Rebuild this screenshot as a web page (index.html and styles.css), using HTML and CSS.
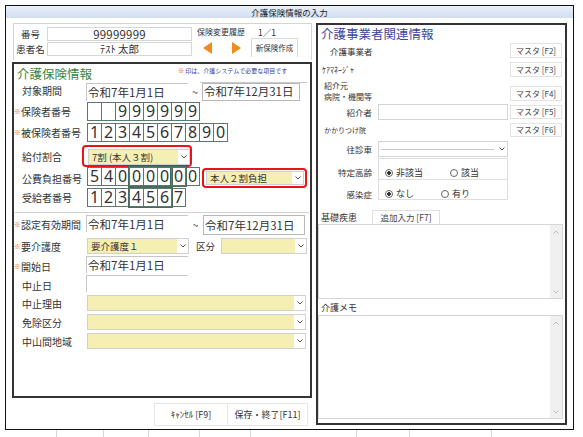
FILE: index.html
```html
<!DOCTYPE html>
<html lang="ja">
<head>
<meta charset="utf-8">
<title>介護保険情報の入力</title>
<link rel="stylesheet" href="styles.css">
</head>
<body>
<div class="win">
  <div class="titlebar">介護保険情報の入力</div>
  <div class="content">
    <div class="leftcol">
      <div class="header">
        <div class="hlabels"><div class="hl">番号</div><div class="hl">患者名</div></div>
        <div class="hfields"><div class="hf num">99999999</div><div class="hf">ﾃｽﾄ 太郎</div></div>
        <div class="hright">
          <div class="hist"><span>保険変更履歴</span><span class="cnt">1／1</span></div>
          <div class="nav">
            <svg class="arrow" width="9" height="12" viewBox="0 0 9 12"><polygon points="9,0 9,12 0,6" fill="#f08a1c"/></svg>
            <svg class="arrow r" width="9" height="12" viewBox="0 0 9 12"><polygon points="0,0 0,12 9,6" fill="#f08a1c"/></svg>
            <div class="newbtn">新保険作成</div>
          </div>
        </div>
      </div>

      <div class="lpanel">
        <div class="ltitle">
          <div class="ttl green">介護保険情報</div>
          <div class="noteblk">
            <div class="note"><span class="red">※</span> 印は、介護システムで必要な項目です</div>
            <div class="noteline"></div>
          </div>
        </div>

        <div class="row r1">
          <div class="lbl">対象期間</div>
          <div class="date">令和7年1月1日</div>
          <div class="tilde">~</div>
          <div class="date2">令和7年12月31日</div>
        </div>

        <div class="row r2">
          <div class="lbl req"><span class="ast">※</span>保険者番号</div>
          <div class="cells">
            <div class="cell"></div><div class="cell"></div><div class="cell">9</div><div class="cell">9</div><div class="cell">9</div><div class="cell">9</div><div class="cell">9</div><div class="cell">9</div>
          </div>
        </div>

        <div class="row r3">
          <div class="lbl req"><span class="ast">※</span>被保険者番号</div>
          <div class="cells">
            <div class="cell">1</div><div class="cell">2</div><div class="cell">3</div><div class="cell">4</div><div class="cell">5</div><div class="cell">6</div><div class="cell">7</div><div class="cell">8</div><div class="cell">9</div><div class="cell">0</div>
          </div>
        </div>

        <div class="row r4">
          <div class="lbl">給付割合</div>
          <div class="redframe rf1">
            <div class="sel w101"><div class="v">7割 (本人３割)</div><div class="arr"><svg width="6" height="4" viewBox="0 0 6 4"><polyline points="0.5,0.5 3,3 5.5,0.5" fill="none" stroke="#555" stroke-width="1"/></svg></div></div>
          </div>
        </div>

        <div class="row r5">
          <div class="lbl">公費負担番号</div>
          <div class="cells">
            <div class="cell">5</div><div class="cell">4</div><div class="cell">0</div>
            <div class="grp"><div class="cell">0</div><div class="cell">0</div><div class="cell">0</div></div>
            <div class="grp"><div class="cell">0</div></div>
            <div class="cell">0</div>
          </div>
          <div class="redframe rf2">
            <div class="sel grow h15"><div class="v">本人２割負担</div><div class="arr"><svg width="6" height="4" viewBox="0 0 6 4"><polyline points="0.5,0.5 3,3 5.5,0.5" fill="none" stroke="#555" stroke-width="1"/></svg></div></div>
          </div>
        </div>

        <div class="row r6">
          <div class="lbl">受給者番号</div>
          <div class="cells">
            <div class="cell">1</div><div class="cell">2</div><div class="cell">3</div>
            <div class="grp"><div class="cell">4</div><div class="cell">5</div><div class="cell">6</div></div>
            <div class="cell">7</div>
          </div>
        </div>

        <div class="sep"></div>

        <div class="row r7">
          <div class="lbl req"><span class="ast">※</span>認定有効期間</div>
          <div class="date h17">令和7年1月1日</div>
          <div class="tilde t2">~</div>
          <div class="date2 w102">令和7年12月31日</div>
        </div>

        <div class="row r8">
          <div class="lbl req"><span class="ast">※</span>要介護度</div>
          <div class="sel w101"><div class="v">要介護度１</div><div class="arr"><svg width="6" height="4" viewBox="0 0 6 4"><polyline points="0.5,0.5 3,3 5.5,0.5" fill="none" stroke="#555" stroke-width="1"/></svg></div></div>
          <div class="kbn">区分</div>
          <div class="sel w86"><div class="v"></div><div class="arr"><svg width="6" height="4" viewBox="0 0 6 4"><polyline points="0.5,0.5 3,3 5.5,0.5" fill="none" stroke="#555" stroke-width="1"/></svg></div></div>
        </div>

        <div class="row r9">
          <div class="lbl req"><span class="ast">※</span>開始日</div>
          <div class="date h17">令和7年1月1日</div>
        </div>

        <div class="row r10">
          <div class="lbl">中止日</div>
          <div class="date h17"></div>
        </div>

        <div class="row r11">
          <div class="lbl">中止理由</div>
          <div class="sel w219"><div class="v"></div><div class="arr"><svg width="6" height="4" viewBox="0 0 6 4"><polyline points="0.5,0.5 3,3 5.5,0.5" fill="none" stroke="#555" stroke-width="1"/></svg></div></div>
        </div>

        <div class="row r12">
          <div class="lbl">免除区分</div>
          <div class="sel w219"><div class="v"></div><div class="arr"><svg width="6" height="4" viewBox="0 0 6 4"><polyline points="0.5,0.5 3,3 5.5,0.5" fill="none" stroke="#555" stroke-width="1"/></svg></div></div>
        </div>

        <div class="row r13">
          <div class="lbl">中山間地域</div>
          <div class="sel w219"><div class="v"></div><div class="arr"><svg width="6" height="4" viewBox="0 0 6 4"><polyline points="0.5,0.5 3,3 5.5,0.5" fill="none" stroke="#555" stroke-width="1"/></svg></div></div>
        </div>
      </div>

      <div class="btns">
        <div class="btn b1">ｷｬﾝｾﾙ [F9]</div>
        <div class="btn b2">保存・終了[F11]</div>
      </div>
    </div>

    <div class="rpanel">
      <div class="rtitle">介護事業者関連情報</div>

      <div class="rrow f2">
        <div class="rl jigyo">介護事業者</div>
        <div class="mbtn">マスタ [F2]</div>
      </div>
      <div class="rrow f3">
        <div class="rl care">ｹｱﾏﾈｰｼﾞｬ</div>
        <div class="mbtn">マスタ [F3]</div>
      </div>
      <div class="rrow f4">
        <div class="rl two"><div>紹介元</div><div>病院・機関等</div></div>
        <div class="mbtn">マスタ [F4]</div>
      </div>
      <div class="rrow f5">
        <div class="rlab">紹介者</div>
        <div class="inp"></div>
        <div class="mbtn">マスタ [F5]</div>
      </div>
      <div class="rrow f6">
        <div class="rl kaka">かかりつけ院</div>
        <div class="mbtn">マスタ [F6]</div>
      </div>
      <div class="rrow f7">
        <div class="rlab">往診車</div>
        <div class="wsel"><div class="wv"><div class="wline"></div></div><div class="arr"><svg width="6" height="4" viewBox="0 0 6 4"><polyline points="0.5,0.5 3,3 5.5,0.5" fill="none" stroke="#555" stroke-width="1"/></svg></div></div>
      </div>
      <div class="rrow rad1">
        <div class="rlab">特定高齢</div>
        <div class="radbox">
          <span class="radio on"></span><span class="rt">非該当</span>
          <span class="radio r2nd"></span><span class="rt">該当</span>
        </div>
      </div>
      <div class="rrow rad2">
        <div class="rlab">感染症</div>
        <div class="radbox last">
          <span class="radio on"></span><span class="rt">なし</span>
          <span class="radio r2nd"></span><span class="rt">有り</span>
        </div>
      </div>

      <div class="rrow kiso">
        <div class="klab">基礎疾患</div>
        <div class="addbtn">追加入力 [F7]</div>
      </div>
      <div class="tarea ta1">
        <div class="tbody"></div>
        <div class="sbar">
          <svg width="6" height="4" viewBox="0 0 6 4"><polyline points="0.5,3.5 3,1 5.5,3.5" fill="none" stroke="#bbb" stroke-width="1"/></svg>
          <svg width="6" height="4" viewBox="0 0 6 4"><polyline points="0.5,0.5 3,3 5.5,0.5" fill="none" stroke="#bbb" stroke-width="1"/></svg>
        </div>
      </div>
      <div class="memo">介護メモ</div>
      <div class="tarea ta2">
        <div class="tbody"></div>
        <div class="sbar">
          <svg width="6" height="4" viewBox="0 0 6 4"><polyline points="0.5,3.5 3,1 5.5,3.5" fill="none" stroke="#bbb" stroke-width="1"/></svg>
          <svg width="6" height="4" viewBox="0 0 6 4"><polyline points="0.5,0.5 3,3 5.5,0.5" fill="none" stroke="#bbb" stroke-width="1"/></svg>
        </div>
      </div>
    </div>
  </div>
</div>
<div class="below">
  <div class="bl" style="width:52px"></div>
  <div class="bl" style="width:47px"></div>
  <div class="bl" style="width:45px"></div>
  <div class="bl" style="width:51px"></div>
  <div class="bl" style="width:51px"></div>
  <div class="bl" style="width:106px"></div>
  <div class="bl" style="width:53px"></div>
  <div class="bl" style="width:82px"></div>
</div>
</body>
</html>
```

FILE: styles.css
```css
* { box-sizing: border-box; }
html, body { margin: 0; padding: 0; }
body {
  width: 583px;
  height: 437px;
  overflow: hidden;
  background: #fff;
  color: #333;
  font-family: "Noto Sans CJK JP", "Noto Sans", sans-serif;
}

.win {
  margin: 5px 0 0 5px;
  width: 569px;
  height: 425px;
  border: 1px solid #111;
  display: flex;
  flex-direction: column;
}
.titlebar {
  flex: none;
  height: 12px;
  background: linear-gradient(#e8eff9, #d2dff0);
  font-size: 8.5px;
  line-height: 12px;
  text-align: center;
  color: #222;
}
.content { flex: 1; display: flex; min-height: 0; }

/* left column */
.leftcol {
  flex: none;
  width: 306px;
  padding: 5px 0 0 6px;
  display: flex;
  flex-direction: column;
}
.header {
  flex: none;
  margin-left: 1px;
  width: 299px;
  height: 37px;
  border: 1px solid #d4d4d4;
  border-bottom: none;
  display: flex;
}
.hlabels {
  width: 33px;
  padding-top: 3px;
  display: flex;
  flex-direction: column;
  gap: 1px;
}
.hl { height: 14px; font-size: 9.5px; line-height: 14px; text-align: center; color: #333; }
.hfields {
  width: 145px;
  padding-top: 3px;
  display: flex;
  flex-direction: column;
  gap: 1px;
}
.hf {
  height: 14px;
  border: 1px solid #d6d6d6;
  font-size: 10.5px;
  line-height: 12px;
  text-align: center;
  color: #333;
}
.hf.num { font-size: 11.5px; letter-spacing: 0.2px; }
.hright { flex: 1; padding-top: 2px; display: flex; flex-direction: column; }
.hist { height: 12px; padding-left: 5px; font-size: 8px; line-height: 12px; display: flex; color: #333; }
.cnt { margin-left: 13px; font-size: 8.5px; }
.nav { height: 19px; display: flex; align-items: center; padding-left: 11px; }
.arrow { flex: none; margin-top: 1px; }
.arrow.r { margin-left: 20px; }
.newbtn {
  margin-left: 10px;
  width: 47px;
  height: 19px;
  border: 1px solid #dadada;
  border-bottom: none;
  font-size: 7.5px;
  line-height: 18px;
  text-align: center;
  color: #333;
}

.lpanel {
  flex: none;
  margin-top: 2px;
  width: 300px;
  height: 336px;
  border: 2px solid #333;
  display: flex;
  flex-direction: column;
}
.ltitle { flex: none; height: 19px; display: flex; }
.ttl { width: 164px; padding-left: 3px; font-size: 12.5px; line-height: 19px; }
.green { color: #3d843d; }
.noteblk { flex: 1; display: flex; flex-direction: column; justify-content: space-between; }
.note { font-size: 6px; line-height: 8px; padding-top: 3px; color: #33409a; white-space: nowrap; }
.red { color: #e33; }
.noteline { margin: 0 3px 0 22px; height: 1px; background: #c8c8c8; }

.row { flex: none; display: flex; align-items: center; }
.lbl {
  flex: none;
  width: 72px;
  padding-left: 8px;
  font-size: 10px;
  white-space: nowrap;
  color: #333;
}
.lbl.req { padding-left: 0; }
.ast { display: inline-block; width: 7px; font-size: 6.5px; color: #e55; vertical-align: 2px; }

.r1 { height: 18px; align-items: flex-start; }
.r2 { height: 20px; }
.r3 { height: 19px; margin-top: 2px; }
.r4 { height: 22px; margin-top: 3px; }
.r5 { height: 21px; align-items: flex-start; }
.r5 .lbl { padding-top: 4px; }
.r6 { height: 19px; }
.sep { flex: none; height: 1px; margin: 5px 1px 0; background: #d0d0d0; }
.r7 { height: 20px; margin-top: 2px; align-items: flex-start; }
.r7 .lbl { padding-top: 2px; }
.r8 { height: 16px; margin-top: 3px; }
.r9 { height: 17px; margin-top: 2px; align-items: flex-start; }
.r10 { height: 17px; margin-top: 2px; align-items: flex-start; }
.r9 .lbl, .r10 .lbl { padding-top: 3px; }
.r11, .r12, .r13 { height: 16px; margin-top: 3px; }

.date {
  flex: none;
  width: 102px;
  height: 18px;
  border-top: 1px solid #c6c6c6;
  border-left: 1px solid #c6c6c6;
  padding-left: 1px;
  font-size: 11.5px;
  line-height: 17px;
  color: #333;
  white-space: nowrap;
}
.date.h17 { height: 17px; line-height: 16px; }
.tilde { flex: none; width: 14px; text-align: center; font-size: 10px; line-height: 18px; color: #444; }
.tilde.t2 { width: 15px; line-height: 20px; }
.date2 {
  flex: none;
  width: 98px;
  height: 18px;
  border: 1px solid #b8b8b8;
  padding-left: 1px;
  font-size: 11.5px;
  line-height: 15px;
  color: #333;
  white-space: nowrap;
}
.date2.w102 { width: 102px; height: 20px; line-height: 18px; }

.cells { flex: none; display: flex; margin-left: 1px; }
.cell {
  flex: none;
  width: 15px;
  height: 19px;
  margin-right: -1px;
  border: 1px solid #5c786c;
  font-size: 16px;
  line-height: 17px;
  text-align: center;
  color: #333;
  font-family: "Noto Sans", sans-serif;
}
.grp { display: flex; margin-right: -1px; outline: 1px solid #4a6a5c; position: relative; z-index: 1; }
.grp .cell:last-child { margin-right: 0; }

.redframe { flex: none; border: 2px solid #e8141c; border-radius: 4px; display: flex; }
.rf1 { margin-left: -4px; width: 110px; height: 22px; padding: 2px 2px 2px 3px; }
.rf2 { margin-left: 3px; margin-top: 1px; width: 105px; height: 20px; padding: 1px 1px 1px 2px; }

.sel {
  flex: none;
  display: flex;
  height: 16px;
  border: 1px solid #d0d0d0;
  background: #fff;
}
.sel.grow { flex: 1; }
.sel.h15 { height: 14px; }
.sel .v {
  flex: 1;
  background: #f6efb3;
  font-size: 9.5px;
  line-height: 14px;
  padding-left: 3px;
  color: #333;
  white-space: nowrap;
  overflow: hidden;
}
.sel.h15 .v { line-height: 12px; }
.arr { flex: none; width: 11px; display: flex; align-items: center; justify-content: center; }
.w101 { width: 102px; margin-left: 1px; }
.w86 { width: 86px; }
.w219 { width: 219px; margin-left: 1px; }
.kbn { flex: none; width: 32px; padding-left: 7px; font-size: 9.5px; color: #333; }

.btns { flex: none; display: flex; justify-content: flex-end; margin-top: 5px; padding-right: 4px; }
.btn {
  height: 23px;
  border: 1px solid #e6e6e6;
  background: #fff;
  font-size: 9px;
  line-height: 21px;
  text-align: center;
  color: #333;
}
.b1 { width: 74px; }
.b2 { width: 80px; border-left: none; }

/* right panel */
.rpanel {
  flex: none;
  margin: 5px 0 0 4px;
  width: 251px;
  height: 402px;
  border: 2px solid #333;
  display: flex;
  flex-direction: column;
}
.rtitle { flex: none; height: 18px; padding-left: 3px; font-size: 12.5px; line-height: 18px; color: #3b4799; }
.rrow { flex: none; display: flex; align-items: center; }
.rl { font-size: 8.5px; color: #333; white-space: nowrap; }
.mbtn {
  flex: none;
  margin-left: auto;
  margin-right: 3px;
  width: 52px;
  height: 15px;
  border: 1px solid #e2e2e2;
  background: #fff;
  font-size: 8px;
  line-height: 13px;
  text-align: center;
  color: #444;
}
.f2 { height: 15px; }
.jigyo { padding-left: 12px; }
.f3 { height: 15px; margin-top: 4px; }
.care { padding-left: 4px; font-size: 8px; }
.f4 { height: 24px; margin-top: 1px; align-items: flex-end; }
.f4 .mbtn { margin-bottom: 1px; }
.two { padding-left: 6px; font-size: 8px; line-height: 11px; padding-bottom: 0; }
.f5 { height: 16px; margin-top: 2px; }
.rlab { flex: none; width: 54px; text-align: right; font-size: 8.5px; color: #333; white-space: nowrap; }
.inp { flex: none; width: 130px; height: 16px; margin-left: 6px; border: 1px solid #d4d4d4; }
.f5 .mbtn { height: 14px; line-height: 12px; }
.f6 { height: 14px; margin-top: 3px; }
.kaka { padding-left: 6px; font-size: 7px; }
.f6 .mbtn { height: 14px; line-height: 12px; }
.f7 { height: 16px; margin-top: 4px; }
.wsel { flex: none; width: 130px; height: 16px; margin-left: 6px; border: 1px solid #d4d4d4; display: flex; }
.wv { flex: 1; padding: 0 2px; }
.wline { height: 8px; border-bottom: 1px solid #c8c8c8; }
.rad1 { height: 21px; margin-top: 1px; align-items: stretch; }
.rad2 { height: 21px; align-items: stretch; }
.rad1 .rlab { padding-top: 8px; }
.rad2 .rlab { padding-top: 9px; }
.radbox {
  flex: none;
  width: 130px;
  margin-left: 6px;
  border: 1px solid #dedede;
  border-bottom: none;
  display: flex;
  align-items: center;
  padding: 7px 0 0 6px;
}
.radbox.last { border-bottom: 1px solid #dedede; padding-top: 8px; }
.radio {
  flex: none;
  display: inline-block;
  width: 8px;
  height: 8px;
  border: 1px solid #666;
  border-radius: 50%;
  background: #fff;
}
.radio.on { background: radial-gradient(circle, #333 0 1.6px, #fff 2.1px); }
.radio.r2nd { margin-left: 27px; }
.rt { margin-left: 3px; font-size: 9px; color: #333; }

.kiso { height: 16px; margin-top: 8px; align-items: flex-end; }
.klab { width: 54px; padding-left: 3px; font-size: 9px; line-height: 13px; color: #333; }
.addbtn {
  flex: none;
  width: 68px;
  height: 14px;
  border: 1px solid #e0e0e0;
  border-bottom: none;
  font-size: 8.5px;
  line-height: 12px;
  text-align: center;
  color: #444;
}
.tarea {
  flex: none;
  margin-right: 2px;
  border: 1px solid #d6d6d6;
  display: flex;
}
.ta1 { height: 75px; }
.ta2 { height: 104px; }
.tbody { flex: 1; }
.sbar {
  flex: none;
  width: 12px;
  background: #f0f0f0;
  display: flex;
  flex-direction: column;
  justify-content: space-between;
  align-items: center;
  padding: 5px 0 4px;
}
.memo { flex: none; height: 16px; padding-left: 3px; font-size: 9px; line-height: 18px; color: #333; }

.below { margin-left: 5px; width: 569px; height: 7px; display: flex; }
.bl { flex: none; height: 7px; border-right: 1px solid #d8d8d8; }
```
